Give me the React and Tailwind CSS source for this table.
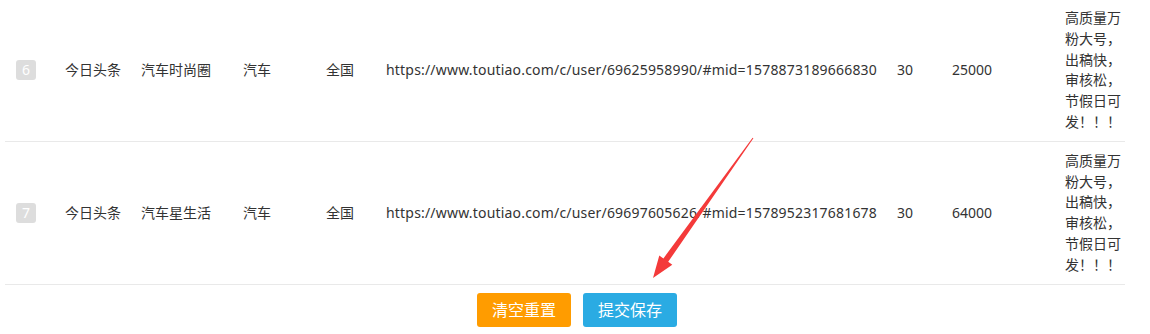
import React from "react";

const rows = [
  {
    id: 6,
    platform: "今日头条",
    name: "汽车时尚圈",
    category: "汽车",
    region: "全国",
    url: "https://www.toutiao.com/c/user/69625958990/#mid=1578873189666830",
    count: "30",
    price: "25000",
    remark: "高质量万粉大号，出稿快，审核松，节假日可发！！！",
  },
  {
    id: 7,
    platform: "今日头条",
    name: "汽车星生活",
    category: "汽车",
    region: "全国",
    url: "https://www.toutiao.com/c/user/69697605626/#mid=1578952317681678",
    count: "30",
    price: "64000",
    remark: "高质量万粉大号，出稿快，审核松，节假日可发！！！",
  },
];

export default function App() {
  return (
    <div
      className="relative w-[1150px] h-[334px] overflow-hidden bg-white text-[#333] text-[14px]"
      style={{ fontFamily: '"Noto Sans", "Noto Sans CJK SC", sans-serif' }}
    >
      <div className="ml-[5px] w-[1120px] -mt-[1px]">
        {rows.map((row) => (
          <div
            key={row.id}
            className="grid grid-cols-[49px_76px_102px_83px_60px_511px_55px_113px_60px] items-center pl-[11px] pt-[9px] pb-[8px] border-b border-[#e9e9e9] leading-[20.8px]"
          >
            <div>
              <span className="flex items-center justify-center w-[20px] h-[20px] rounded-[3px] bg-[#dddddd] text-white text-[14px]">
                {row.id}
              </span>
            </div>
            <div>{row.platform}</div>
            <div>{row.name}</div>
            <div>{row.category}</div>
            <div>{row.region}</div>
            <div className="whitespace-nowrap tracking-[0.19px]">{row.url}</div>
            <div>{row.count}</div>
            <div>{row.price}</div>
            <div className="break-all">{row.remark}</div>
          </div>
        ))}
      </div>

      <div className="flex justify-center gap-[12px] pl-[4px] mt-[8px]">
        <button className="w-[94px] h-[34px] rounded-[3px] bg-[#ff9c00] text-white text-[16px]">
          清空重置
        </button>
        <button className="w-[94px] h-[34px] rounded-[3px] bg-[#2aabe3] text-white text-[16px]">
          提交保存
        </button>
      </div>

      {/* red annotation arrow */}
      <svg
        className="absolute left-0 top-0 pointer-events-none"
        width="1150"
        height="334"
        viewBox="0 0 1150 334"
      >
        <polygon
          points="752.6,137.7 663.4,258.4 659.3,255.5 653,278 672.3,264.8 668.2,261.8 753.4,138.3"
          fill="#f43a3a"
        />
      </svg>
    </div>
  );
}
